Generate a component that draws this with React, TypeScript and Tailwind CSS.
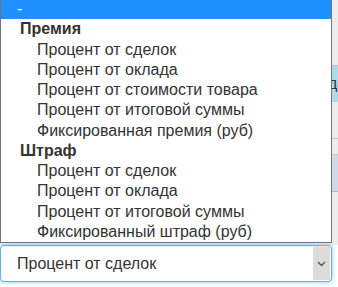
import React from "react";

type Row = { label: string; kind: "blank" | "group" | "item" };

const rows: Row[] = [
    { label: "-", kind: "blank" },
    { label: "Премия", kind: "group" },
    { label: "Процент от сделок", kind: "item" },
    { label: "Процент от оклада", kind: "item" },
    { label: "Процент от стоимости товара", kind: "item" },
    { label: "Процент от итоговой суммы", kind: "item" },
    { label: "Фиксированная премия (руб)", kind: "item" },
    { label: "Штраф", kind: "group" },
    { label: "Процент от сделок", kind: "item" },
    { label: "Процент от оклада", kind: "item" },
    { label: "Процент от итоговой суммы", kind: "item" },
    { label: "Фиксированный штраф (руб)", kind: "item" },
];

function OptionRow({ row }: { row: Row }) {
    if (row.kind === "blank") {
        return <div className="h-[20.25px] pl-[16px] leading-[20.25px] bg-[#1e90ff] text-white">{row.label}</div>;
    }
    if (row.kind === "group") {
        return <div className="h-[20.25px] pl-[19px] leading-[20.25px] font-bold text-[#333]">{row.label}</div>;
    }
    return <div className="h-[20.25px] pl-[36px] leading-[20.25px] text-[#333]">{row.label}</div>;
}

export default function App() {
    return (
        <div className="relative h-[287px] w-[338px] overflow-hidden bg-white font-['Liberation_Sans',Arial,sans-serif] text-[16px]">
            {/* table behind the open list */}
            <div className="flex h-[245px] flex-col bg-[#ececec] text-[16px] text-[#333]">
                <div className="h-[66px] border-b border-[#c4c4c4]" />
                <div className="flex h-[36px] items-center overflow-hidden bg-[#aedbeb] pl-[328px]">
                    <span className="whitespace-nowrap">да</span>
                </div>
                <div className="h-[37px] border-b border-[#c4c4c4]" />
                <div className="h-[16px] border-b border-[#c4c4c4]" />
                <div className="h-[37px] border-b border-[#b8b8c4] bg-[#cfd9e8]" />
                <div className="flex-1" />
            </div>

            {/* select */}
            <div className="flex h-[37px] w-[332px] items-stretch rounded-[4px] border border-[#66afe9] bg-white shadow-[0_0_4px_rgba(102,175,233,0.8),inset_0_1px_1px_rgba(0,0,0,0.075)]">
                <div className="flex flex-1 items-center pl-[16px] text-[#333]">Процент от сделок</div>
                <div className="my-[1px] mr-[1px] flex w-[17px] items-center justify-center bg-[#dcdcdc]">
                    <svg width="9" height="6" viewBox="0 0 9 6" fill="none">
                        <path d="M1 1l3.5 3.5L8 1" stroke="#555" strokeWidth="1.4" />
                    </svg>
                </div>
            </div>

            {/* open option list */}
            <div className="absolute left-0 top-[-1px] w-[332px] border-x border-b border-[#767676] bg-white">
                {rows.map((row, i) => (
                    <OptionRow key={i} row={row} />
                ))}
            </div>
        </div>
    );
}
